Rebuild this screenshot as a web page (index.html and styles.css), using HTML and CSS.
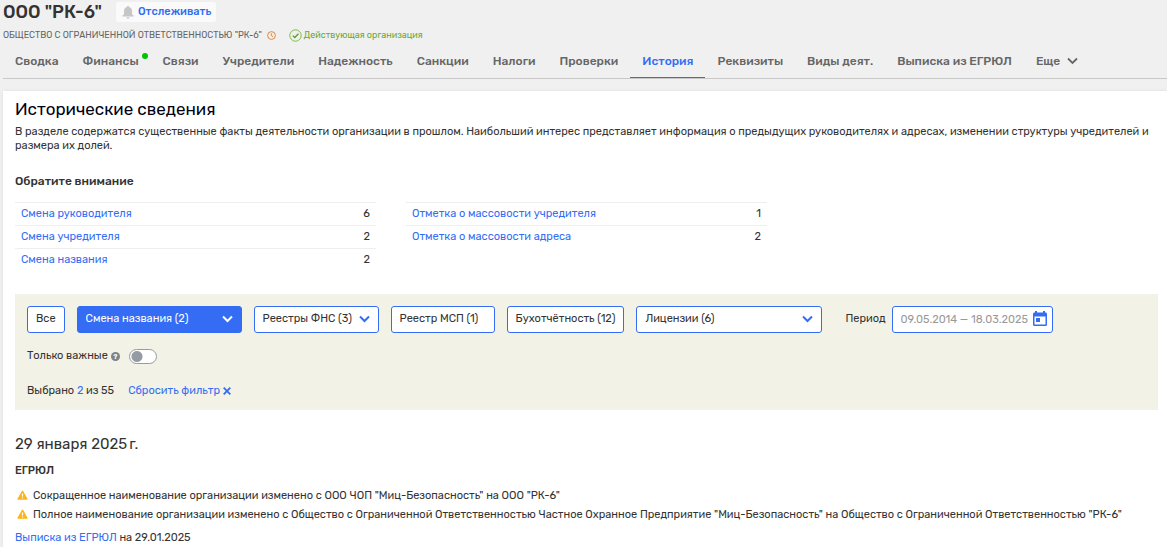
FILE: index.html
```html
<!DOCTYPE html>
<html lang="ru">
<head>
<meta charset="utf-8">
<meta name="viewport" content="width=device-width, initial-scale=1">
<title>ООО "РК-6" — Исторические сведения</title>
<link rel="stylesheet" href="styles.css">
</head>
<body class="page">
<header class="company">
  <div class="company-head">
    <h1 class="company-name">ООО "РК-6"</h1>
    <button class="follow" type="button">
      <svg class="follow-icon" viewBox="0 0 12 13" aria-hidden="true"><path d="M6 0c.7 0 1 .4 1 1.100C9 1.600 10 3.200 10 5v3.200l1.600 1.600v.7H.4v-.7L2 8.200V5c0-1.800 1-3.400 3-3.900C5 .4 5.300 0 6 0zM4.600 11.300h2.800c0 .9-.6 1.500-1.400 1.500s-1.400-.6-1.400-1.500z" fill="#c6c6c6"/></svg>
      Отслеживать
    </button>
  </div>
  <div class="company-info">
    <span class="full-name">ОБЩЕСТВО С ОГРАНИЧЕННОЙ ОТВЕТСТВЕННОСТЬЮ "РК-6"</span>
    <svg class="clock" viewBox="0 0 9 9" aria-hidden="true"><circle cx="4.500" cy="4.500" r="3.900" fill="none" stroke="#dc8a45"/><path d="M4.300 2.200v2.500l1.700 1" fill="none" stroke="#dc8a45"/></svg>
    <span class="status">
      <svg class="status-icon" viewBox="0 0 13 13" aria-hidden="true"><circle cx="6.500" cy="6.500" r="5.700" fill="none" stroke="#69a82f" stroke-width=".8"/><path d="M3.800 6.600l2 1.900 3.600-3.700" fill="none" stroke="#55a010" stroke-width="1.300"/></svg>
      Действующая организация
    </span>
  </div>
</header>

<nav class="tabs">
  <a class="tab" href="#">Сводка</a>
  <a class="tab tab-new" href="#">Финансы</a>
  <a class="tab" href="#">Связи</a>
  <a class="tab" href="#">Учредители</a>
  <a class="tab" href="#">Надежность</a>
  <a class="tab" href="#">Санкции</a>
  <a class="tab" href="#">Налоги</a>
  <a class="tab" href="#">Проверки</a>
  <a class="tab tab-active" href="#" aria-current="page">История</a>
  <a class="tab" href="#">Реквизиты</a>
  <a class="tab" href="#">Виды деят.</a>
  <a class="tab" href="#">Выписка из ЕГРЮЛ</a>
  <button class="tab tab-more" type="button">Еще
    <svg class="chevron" viewBox="0 0 11 8" aria-hidden="true"><path d="M1 1.500l4.500 4.500L10 1.500" fill="none" stroke="currentColor" stroke-width="1.800"/></svg>
  </button>
</nav>

<main class="card">
  <h2 class="card-title">Исторические сведения</h2>
  <p class="lead">В разделе содержатся существенные факты деятельности организации в прошлом. Наибольший интерес представляет информация о предыдущих руководителях и адресах, изменении структуры учредителей и размера их долей.</p>

  <h3 class="notice-title">Обратите внимание</h3>
  <div class="facts">
    <table class="fact-table">
      <tr><th scope="row"><a href="#">Смена руководителя</a></th><td>6</td></tr>
      <tr><th scope="row"><a href="#">Смена учредителя</a></th><td>2</td></tr>
      <tr><th scope="row"><a href="#">Смена названия</a></th><td>2</td></tr>
    </table>
    <table class="fact-table">
      <tr><th scope="row"><a href="#">Отметка о массовости учредителя</a></th><td>1</td></tr>
      <tr><th scope="row"><a href="#">Отметка о массовости адреса</a></th><td>2</td></tr>
    </table>
  </div>

  <form class="filter">
    <div class="filter-row">
      <button class="control" type="button">Все</button>
      <span class="dropdown dropdown-active dropdown-name">
        <select class="control" aria-label="Смена названия"><option>Смена названия (2)</option></select>
        <svg class="chevron" viewBox="0 0 11 8" aria-hidden="true"><path d="M1 1.500l4.500 4.500L10 1.500" fill="none" stroke="currentColor" stroke-width="2"/></svg>
      </span>
      <span class="dropdown dropdown-fns">
        <select class="control" aria-label="Реестры ФНС"><option>Реестры ФНС (3)</option></select>
        <svg class="chevron" viewBox="0 0 11 8" aria-hidden="true"><path d="M1 1.500l4.500 4.500L10 1.500" fill="none" stroke="currentColor" stroke-width="2"/></svg>
      </span>
      <button class="control control-msp" type="button">Реестр МСП (1)</button>
      <button class="control" type="button">Бухотчётность (12)</button>
      <span class="dropdown dropdown-license">
        <select class="control" aria-label="Лицензии"><option>Лицензии (6)</option></select>
        <svg class="chevron" viewBox="0 0 11 8" aria-hidden="true"><path d="M1 1.500l4.500 4.500L10 1.500" fill="none" stroke="currentColor" stroke-width="2"/></svg>
      </span>
      <div class="period">
        <label for="period">Период</label>
        <span class="date">
          <input class="control" id="period" type="text" value="09.05.2014 — 18.03.2025">
          <svg class="calendar" viewBox="0 0 14 16" aria-hidden="true"><path d="M2 0h2v1.500h6V0h2v1.500h.5c.9 0 1.500.6 1.500 1.500v10.500c0 .9-.6 1.500-1.500 1.500h-11C.6 15 0 14.400 0 13.500V3c0-.9.600-1.500 1.500-1.500H2zM1.500 5.500v8h11v-8zM3 7h4v4H3z" fill="#346df4" fill-rule="evenodd"/></svg>
        </span>
      </div>
    </div>
    <div class="filter-toggle">
      <label for="important">Только важные</label>
      <button class="help" type="button" aria-label="Подсказка">?</button>
      <input class="switch" id="important" type="checkbox">
    </div>
    <div class="filter-summary">
      <span>Выбрано <a href="#">2</a> из 55</span>
      <a class="reset" href="#">Сбросить фильтр
        <svg class="cross" viewBox="0 0 8 8" aria-hidden="true"><path d="M.7.7l6.600 6.600M7.300.7L.7 7.300" stroke="currentColor" stroke-width="1.800"/></svg>
      </a>
    </div>
  </form>

  <section class="events">
    <h2 class="event-date">29 января 2025<span class="year-mark">г.</span></h2>
    <h3 class="event-source">ЕГРЮЛ</h3>
    <ul class="event-list">
      <li class="event"><svg class="warning" viewBox="0 0 11 10" aria-hidden="true"><path d="M5.500.8l4.700 8.400H.8z" fill="#fbb41a" stroke="#fbb41a" stroke-linejoin="round"/><path d="M5.500 3.500v3M5.500 7.400v1.200" stroke="#fff" stroke-width="1.200"/></svg>Сокращенное наименование организации изменено с ООО ЧОП "Миц-Безопасность" на ООО "РК-6"</li>
      <li class="event"><svg class="warning" viewBox="0 0 11 10" aria-hidden="true"><path d="M5.500.8l4.700 8.400H.8z" fill="#fbb41a" stroke="#fbb41a" stroke-linejoin="round"/><path d="M5.500 3.500v3M5.500 7.400v1.200" stroke="#fff" stroke-width="1.200"/></svg>Полное наименование организации изменено с Общество с Ограниченной Ответственностью Частное Охранное Предприятие "Миц-Безопасность" на Общество с Ограниченной Ответственностью "РК-6"</li>
    </ul>
    <p class="extract"><a href="#">Выписка из ЕГРЮЛ</a> на 29.01.2025</p>
  </section>
</main>
</body>
</html>
```
FILE: styles.css
```css
* {
  box-sizing: border-box;
}

.page {
  margin: 0;
  padding-left: 3px;
  background: #f0f0f0;
  color: #333;
  font: 11px/14px Rubik, Roboto, sans-serif;
}

h1, h2, h3, p, ul {
  margin: 0;
  padding: 0;
}

a {
  color: #346df4;
  text-decoration: none;
}

button, input, select {
  margin: 0;
  font: inherit;
  color: inherit;
}

svg {
  display: block;
  flex: none;
}

.company-head {
  display: flex;
  align-items: center;
  gap: 14px;
  height: 24px;
}

.company-name {
  font-size: 18px;
  line-height: 20px;
  font-weight: 500;
}

.follow {
  display: flex;
  align-items: center;
  gap: 4px;
  height: 20px;
  padding: 0 5px 0 6px;
  border: 0;
  border-radius: 3px;
  background: #fafafa;
  color: #346df4;
  font-weight: 500;
}

.follow-icon {
  width: 12px;
  height: 13px;
}

.company-info {
  display: flex;
  align-items: center;
  height: 22px;
  font-size: 9px;
}

.full-name {
  color: #666;
}

.clock {
  width: 9px;
  height: 9px;
  margin: 0 13px 0 5px;
}

.status {
  display: flex;
  align-items: center;
  gap: 2px;
  color: #69a82f;
}

.status-icon {
  width: 13px;
  height: 13px;
}

.tabs {
  display: flex;
  height: 33px;
  border-bottom: 1px solid #c8c8c8;
  font-size: 12px;
  font-weight: 500;
}

.tab {
  padding: 8px 12px 0;
  border: 0;
  border-bottom: 1px solid transparent;
  background: none;
  color: #666;
  white-space: nowrap;
}

.tab-new {
  position: relative;
}

.tab-new::after {
  content: "";
  position: absolute;
  top: 7px;
  right: 3px;
  width: 6px;
  height: 6px;
  border-radius: 50%;
  background: #00c400;
}

.tab-active {
  border-color: #346df4;
  color: #346df4;
}

.tab-more {
  display: flex;
  align-items: flex-start;
  gap: 7px;
}

.chevron {
  width: 11px;
  height: 8px;
}

.tab-more .chevron {
  margin-top: 3px;
}

.card {
  margin-top: 12px;
  padding: 8px 9px 12px 12px;
  background: #fff;
  box-shadow: 0 0 3px #dcdcdc;
}

.card-title {
  color: #001;
  font-size: 17px;
  line-height: 20px;
  font-weight: 400;
}

.lead {
  margin-top: 6px;
}

.notice-title {
  margin-top: 21px;
  font-size: 12px;
  font-weight: 500;
}

.facts {
  display: flex;
  align-items: flex-start;
  gap: 30px;
  margin-top: 14px;
}

.fact-table {
  flex: 0 1 361px;
  border-collapse: collapse;
}

.fact-table th,
.fact-table td {
  height: 23px;
  padding: 0 6px;
  border-top: 1px solid #eee;
  font-weight: 400;
  text-align: left;
}

.fact-table td {
  text-align: right;
}

.filter {
  margin-top: 22px;
  padding: 12px;
  background: #f2f2e6;
}

.filter-row {
  display: flex;
  flex-wrap: wrap;
  gap: 12px;
}

.control {
  height: 27px;
  padding: 0 8px;
  border: 1px solid #346df4;
  border-radius: 3px;
  background: #fff;
  text-align: left;
  white-space: nowrap;
}

.dropdown,
.date {
  display: grid;
  align-items: center;
  color: #346df4;
}

.dropdown > *,
.date > * {
  grid-area: 1 / 1;
}

.dropdown .control {
  width: 100%;
  appearance: none;
  color: #333;
}

.dropdown .chevron {
  justify-self: end;
  margin-right: 9px;
  pointer-events: none;
}

.dropdown-active,
.dropdown-active .control {
  color: #fff;
}

.dropdown-active .control {
  background: #346df4;
}

.dropdown-name {
  width: 165px;
}

.dropdown-fns {
  width: 125px;
}

.dropdown-license {
  width: 186px;
}

.control-msp {
  width: 104px;
}

.period {
  display: flex;
  align-items: center;
  gap: 6px;
  margin-left: 11px;
}

.date .control {
  width: 161px;
  color: #999;
}

.date .calendar {
  justify-self: end;
  width: 14px;
  height: 16px;
  margin-right: 6px;
  pointer-events: none;
}

.filter-toggle {
  display: flex;
  align-items: center;
  height: 15px;
  margin-top: 16px;
}

.help {
  width: 9px;
  height: 9px;
  margin: 0 9px 0 3px;
  padding: 0;
  border: 0;
  border-radius: 50%;
  background: #7c828a;
  color: #fff;
  font-size: 7px;
  line-height: 9px;
  font-weight: 700;
}

.switch {
  appearance: none;
  width: 28px;
  height: 15px;
  border: 1px solid #959ba3;
  border-radius: 8px;
  background: #fff radial-gradient(circle at 7px 50%, #959ba3 5px, transparent 6px);
}

.filter-summary {
  display: flex;
  gap: 14px;
  margin-top: 20px;
}

.reset {
  display: flex;
  align-items: center;
  gap: 3px;
}

.cross {
  width: 8px;
  height: 8px;
}

.event-date {
  margin-top: 24px;
  font-size: 15px;
  line-height: 20px;
  font-weight: 400;
}

.year-mark {
  margin-left: 2px;
}

.event-source {
  margin-top: 10px;
  font-size: 11px;
  font-weight: 500;
}

.event-list {
  margin-top: 8px;
  list-style: none;
}

.event {
  display: flex;
  gap: 5px;
  padding-left: 2px;
  line-height: 19px;
}

.warning {
  width: 11px;
  height: 10px;
  margin-top: 4px;
}

.extract {
  margin-top: 7px;
}
```
